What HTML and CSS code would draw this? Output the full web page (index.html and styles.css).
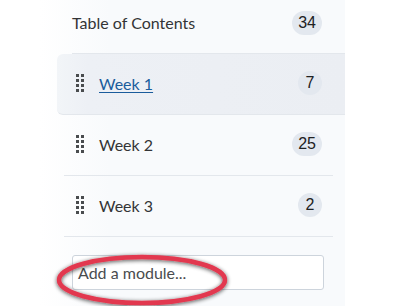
FILE: index.html
```html
<!DOCTYPE html>
<html>
<head>
<meta charset="utf-8">
<link rel="stylesheet" href="styles.css">
</head>
<body>
<div class="panel">
  <div class="toc">
    <span class="title">Table of Contents</span>
    <span class="badge pill">34</span>
  </div>
  <ul class="modules">
    <li class="module active">
      <span class="handle"><i></i><i></i><i></i><i></i><i></i><i></i><i></i><i></i></span>
      <a class="name link" href="#">Week 1</a>
      <span class="badge">7</span>
    </li>
    <li class="module">
      <span class="handle"><i></i><i></i><i></i><i></i><i></i><i></i><i></i><i></i></span>
      <span class="name">Week 2</span>
      <span class="badge pill">25</span>
    </li>
    <li class="module">
      <span class="handle"><i></i><i></i><i></i><i></i><i></i><i></i><i></i><i></i></span>
      <span class="name">Week 3</span>
      <span class="badge">2</span>
    </li>
  </ul>
  <div class="add">
    <div class="input">Add a module...</div>
    <svg class="circle" width="184" height="62" viewBox="0 0 184 62">
      <defs>
        <filter id="sh" x="-20%" y="-40%" width="140%" height="180%">
          <feGaussianBlur in="SourceAlpha" stdDeviation="2"/>
          <feOffset dx="0" dy="1" result="b"/>
          <feComponentTransfer><feFuncA type="linear" slope="0.7"/></feComponentTransfer>
          <feMerge><feMergeNode/><feMergeNode in="SourceGraphic"/></feMerge>
        </filter>
      </defs>
      <ellipse cx="92" cy="30" rx="83" ry="23" fill="none" stroke="#e2384f" stroke-width="4.5" filter="url(#sh)"/>
    </svg>
  </div>
</div>
</body>
</html>
```
FILE: styles.css
```css
html, body {
  margin: 0;
  padding: 0;
  background: #fff;
}
body {
  font-family: Lato, "Liberation Sans", sans-serif;
  color: #333436;
  width: 400px;
  height: 306px;
  overflow: hidden;
}
.panel {
  width: 345px;
  height: 306px;
  background: linear-gradient(to right, #ffffff 0, #ffffff 40px, #f8fafc 110px, #f8fafc 100%);
}
.toc {
  display: flex;
  align-items: center;
  justify-content: space-between;
  height: 45px;
  margin-left: 72px;
  padding-right: 23px;
  padding-bottom: 8px;
  border-bottom: 1px solid #e3e7ec;
}
.title {
  font-size: 16px;
  color: #333436;
}
.badge {
  font-family: "Liberation Sans", Arial, sans-serif;
  font-size: 16px;
  color: #202122;
  background: #e3e8ef;
  height: 24px;
  min-width: 24px;
  border-radius: 12px;
  display: inline-flex;
  align-items: center;
  justify-content: center;
  box-sizing: border-box;
}
.badge.pill {
  padding: 0 6px;
}
.modules {
  list-style: none;
  margin: 0;
  padding: 0;
}
.module {
  display: flex;
  align-items: center;
  height: 60px;
  margin-left: 64px;
  margin-right: 12px;
  padding-left: 12px;
  padding-right: 11px;
  border-bottom: 1px solid #e3e7ec;
}
.module .name, .module .handle, .module .badge {
  position: relative;
  top: -1px;
}
.module.active {
  background: linear-gradient(to right, #f2f5f8 0, #edf0f5 30px, #ebeef3 100%);
  margin-left: 57px;
  padding-left: 19px;
  margin-right: 0;
  padding-right: 23px;
  border-radius: 6px 0 0 6px;
}
.handle {
  display: grid;
  grid-template-columns: 3px 3px;
  column-gap: 2px;
  row-gap: 2px;
  width: 8px;
  margin-right: 15px;
}
.handle i {
  display: block;
  width: 3px;
  height: 3px;
  background: #494c4e;
}
.name {
  flex: 1;
  font-size: 16px;
  color: #333436;
}
.link {
  color: #1a5c9c;
  text-decoration: underline;
  text-underline-offset: 2px;
}
.add {
  position: relative;
  padding-top: 18px;
  padding-left: 72px;
}
.input {
  width: 252px;
  height: 35px;
  box-sizing: border-box;
  border: 1px solid #cdd4dc;
  border-radius: 3px;
  background: #fff;
  font-size: 16px;
  color: #494c4e;
  padding-left: 5px;
  line-height: 33px;
}
.circle {
  position: absolute;
  left: 50px;
  top: 13px;
}
```
